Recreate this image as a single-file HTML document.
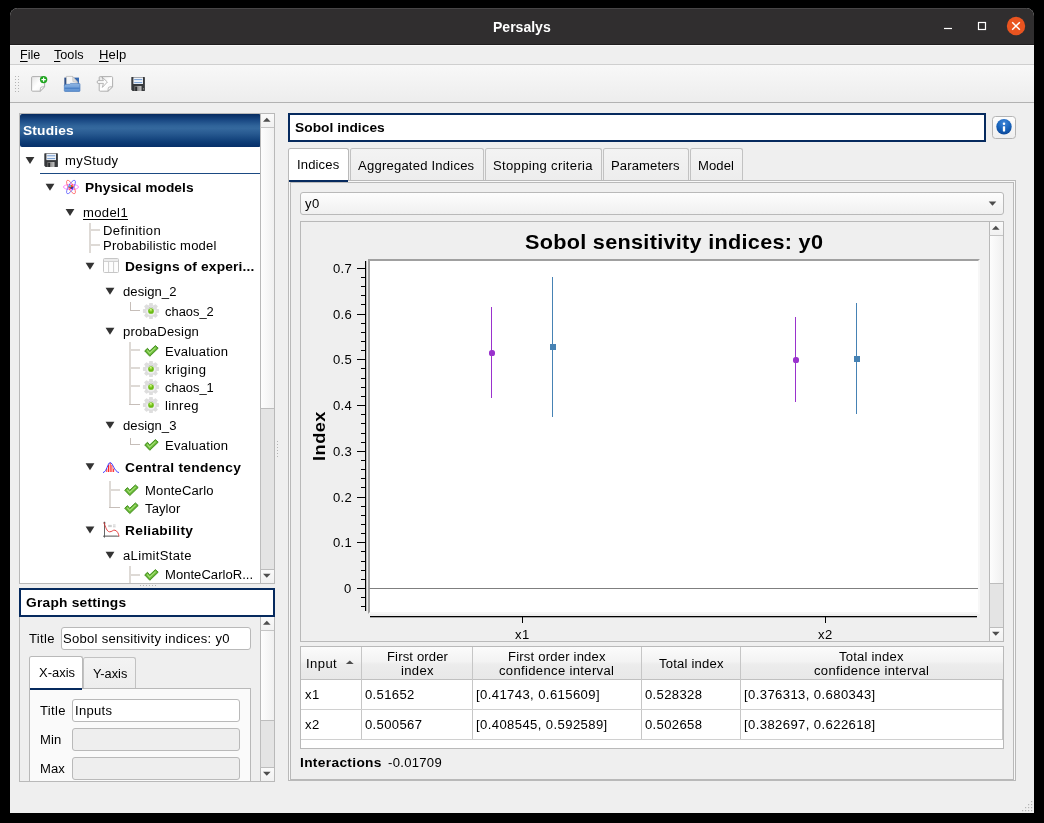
<!DOCTYPE html>
<html><head><meta charset="utf-8"><title>Persalys</title>
<style>
html,body{margin:0;padding:0;background:#000;}
body{width:1044px;height:823px;position:relative;overflow:hidden;font-family:"Liberation Sans",sans-serif;color:#000;}
.a{position:absolute;box-sizing:border-box;}
.t{position:absolute;white-space:nowrap;will-change:transform;transform-origin:0 0;}
u{text-decoration:underline;text-underline-offset:1.5px;text-decoration-thickness:1px;}
svg{position:absolute;overflow:visible;}
</style></head>
<body>
<div class="a " style="left:10px;top:8px;width:1024px;height:805px;background:#efefef;border-radius:8px 8px 0 0;overflow:hidden;"></div>
<div class="a " style="left:10px;top:8px;width:1024px;height:37px;background:#302e2f;border-radius:8px 8px 0 0;"></div>
<div class="t" style="left:493.40px;top:17.80px;font-size:14px;line-height:18px;letter-spacing:-0.000px;transform:scaleX(1.0018);font-weight:bold;color:#fff;">Persalys</div>
<div class="a " style="left:18px;top:8px;width:1008px;height:1px;background:#474546;"></div>
<svg style="left:934px;top:12px" width="100" height="30" viewBox="934 12 100 30"><circle cx="1016" cy="26" r="9.2" fill="#e95420"/><path d="M1012.2 22.2 L1019.8 29.8 M1019.8 22.2 L1012.2 29.8" stroke="#fff" stroke-width="1.5" fill="none"/><rect x="978.5" y="22.5" width="7" height="7" fill="none" stroke="#fff" stroke-width="1.2"/><path d="M944 28.5 H952" stroke="#fff" stroke-width="1.2"/></svg>
<div class="a " style="left:10px;top:44px;width:1024px;height:21px;background:#efefef;border-top:1px solid #1f1d1e;border-bottom:1px solid #cfcfcf;"></div>
<div class="a " style="left:10px;top:45px;width:1024px;height:1px;background:#fafafa;"></div>
<div class="t" style="left:20.00px;top:47.00px;font-size:12.5px;line-height:16px;letter-spacing:-0.020px;transform:scaleX(1.0000);"><u>F</u>ile</div>
<div class="t" style="left:54.00px;top:47.00px;font-size:12.5px;line-height:16px;letter-spacing:-0.000px;transform:scaleX(1.0128);"><u>T</u>ools</div>
<div class="t" style="left:99.00px;top:47.00px;font-size:12.5px;line-height:16px;letter-spacing:0.119px;transform:scaleX(1.0450);"><u>H</u>elp</div>
<div class="a " style="left:10px;top:65px;width:1024px;height:38px;background:linear-gradient(#f8f8f8,#ededed);border-bottom:1px solid #b2b2b2;"></div>
<svg style="left:0;top:0" width="30" height="100"><rect x="15" y="76" width="1" height="1" fill="#b5b5b5"/><rect x="18" y="76" width="1" height="1" fill="#b5b5b5"/><rect x="15" y="79" width="1" height="1" fill="#b5b5b5"/><rect x="18" y="79" width="1" height="1" fill="#b5b5b5"/><rect x="15" y="82" width="1" height="1" fill="#b5b5b5"/><rect x="18" y="82" width="1" height="1" fill="#b5b5b5"/><rect x="15" y="85" width="1" height="1" fill="#b5b5b5"/><rect x="18" y="85" width="1" height="1" fill="#b5b5b5"/><rect x="15" y="88" width="1" height="1" fill="#b5b5b5"/><rect x="18" y="88" width="1" height="1" fill="#b5b5b5"/><rect x="15" y="91" width="1" height="1" fill="#b5b5b5"/><rect x="18" y="91" width="1" height="1" fill="#b5b5b5"/></svg>
<svg style="left:0;top:0" width="160" height="100" viewBox="0 0 160 100">
<defs><linearGradient id="pg" x1="0" y1="0" x2="1" y2="1"><stop offset="0" stop-color="#e4e4e4"/><stop offset="0.5" stop-color="#ffffff"/><stop offset="1" stop-color="#f2f2f2"/></linearGradient>
<linearGradient id="fb" x1="0" y1="0" x2="1" y2="0"><stop offset="0" stop-color="#173a78"/><stop offset="0.5" stop-color="#2d5fa8"/><stop offset="1" stop-color="#3a6db5"/></linearGradient>
<linearGradient id="ff" x1="0" y1="0" x2="0" y2="1"><stop offset="0" stop-color="#8db4e2"/><stop offset="1" stop-color="#5b8fd0"/></linearGradient>
<linearGradient id="sh" x1="0" y1="0" x2="1" y2="0"><stop offset="0" stop-color="#6a6a6a"/><stop offset="1" stop-color="#c4c4c4"/></linearGradient></defs>
<!-- new -->
<path d="M32.6 76.6 H43.6 Q44.6 76.6 44.6 77.6 V86.8 L40.2 91.2 H32.6 Q31.6 91.2 31.6 90.2 V77.6 Q31.6 76.6 32.6 76.6 Z" fill="url(#pg)" stroke="#a6a6a6" stroke-width="0.9"/>
<path d="M44.6 86.8 Q41.5 86.6 40.8 87.4 Q40.2 88.4 40.2 91.2 Z" fill="#fafafa" stroke="#a6a6a6" stroke-width="0.8"/>
<circle cx="43.6" cy="79.6" r="3.7" fill="#1fa51f"/>
<path d="M43.6 77.4 V81.8 M41.4 79.6 H45.8" stroke="#fff" stroke-width="1.25"/>
<!-- open -->
<path d="M64.4 77.6 H79 V86 H64.4 Z" fill="url(#fb)"/>
<path d="M66.3 76.4 H72.6 L77.8 82.6 V86 H66.3 Z" fill="#f6f6f6" stroke="#b4b4b4" stroke-width="0.7"/>
<path d="M72.6 76.4 L72.9 81.6 L77.8 82.6 Z" fill="#dedede" stroke="#b0b0b0" stroke-width="0.5"/>
<path d="M64.3 85.2 Q64.3 84.4 65.1 84.4 L69.5 84.3 L70.6 83.4 H79.2 Q80 83.4 80 84.2 V90.6 Q80 91.5 79.2 91.5 H65.1 Q64.3 91.5 64.3 90.6 Z" fill="url(#ff)" stroke="#3f74b8" stroke-width="0.6"/>
<rect x="64.6" y="87.6" width="15.1" height="1.3" fill="#4a80c6"/>
<!-- import -->
<path d="M100.2 76.6 H111.6 Q112.6 76.6 112.6 77.6 V86.8 L108 91.2 H100.2 Q99.2 91.2 99.2 90.2 V77.6 Q99.2 76.6 100.2 76.6 Z" fill="url(#pg)" stroke="#a8a8a8" stroke-width="0.9"/>
<path d="M112.6 86.8 Q109.4 86.6 108.6 87.4 Q108 88.4 108 91.2 Z" fill="#fafafa" stroke="#a8a8a8" stroke-width="0.8"/>
<path d="M98 80.6 H103.4 L102 77 L107.4 82 L102.4 87.4 L103.4 83.4 H98 Q97.2 83.4 97.2 82 Q97.2 80.6 98 80.6 Z" fill="#fbfbfb" stroke="#a4a4a4" stroke-width="0.8" stroke-linejoin="round"/>
<!-- save -->
<path d="M131.3 77.6 Q131.3 77 131.9 77 H144.3 Q144.9 77 144.9 77.6 V90.4 Q144.9 91 144.3 91 H132.6 L131.3 89.8 Z" fill="#37393c"/>
<rect x="133.4" y="77.4" width="9.6" height="6.6" fill="#eef2f8"/>
<rect x="134.2" y="79" width="8" height="1.1" fill="#7fa4d4"/><rect x="134.2" y="82" width="8" height="1.1" fill="#7fa4d4"/>
<rect x="134.3" y="86" width="7.2" height="5" fill="url(#sh)"/><rect x="135.2" y="86.8" width="1.9" height="4.2" fill="#2a2c2f"/>
<rect x="143" y="88" width="0.9" height="1.6" fill="#888"/>
</svg>
<div class="a " style="left:19px;top:113px;width:256px;height:471px;background:#fff;border:1px solid #b9b9b9;"></div>
<div class="a " style="left:20px;top:114px;width:241px;height:33px;background:linear-gradient(#062b60 0%,#194883 18%,#30649a 36%,#34689d 44%,#275990 60%,#0e3d77 84%,#062f69 100%);border-radius:2px;"></div>
<div class="t" style="left:23.20px;top:122.80px;font-size:12.5px;line-height:16px;letter-spacing:0.160px;transform:scaleX(1.1000);font-weight:bold;color:#fff;">Studies</div>
<svg style="left:24px;top:154px" width="12" height="12"><path transform="translate(6.00,6.50)" d="M-4.4 -3.45 H4.4 L0 3.5 Z" fill="#333333"/></svg>
<svg style="left:44px;top:153px" width="16" height="16" viewBox="0 0 16 16">
<path d="M0.3 0.9 Q0.3 0.3 0.9 0.3 H13.3 Q13.9 0.3 13.9 0.9 V13.4 Q13.9 14 13.3 14 H1.6 L0.3 12.8 Z" fill="#37393c"/>
<rect x="2.4" y="0.7" width="9.6" height="6.4" fill="#eef2f8"/>
<rect x="3.2" y="2.2" width="8" height="1.1" fill="#7fa4d4"/><rect x="3.2" y="5" width="8" height="1.1" fill="#7fa4d4"/>
<rect x="3.3" y="9" width="7.2" height="5" fill="url(#sh)"/><rect x="4.2" y="9.8" width="1.9" height="4.2" fill="#2a2c2f"/>
</svg>
<div class="t" style="left:64.80px;top:153.00px;font-size:12.5px;line-height:16px;letter-spacing:0.363px;transform:scaleX(1.0450);">myStudy</div>
<div class="a " style="left:40px;top:173px;width:220px;height:1px;background:#1b4a82;"></div>
<svg style="left:44px;top:181px" width="12" height="12"><path transform="translate(6.00,6.30)" d="M-4.4 -3.45 H4.4 L0 3.5 Z" fill="#333333"/></svg>
<div class="t" style="left:84.80px;top:180.00px;font-size:12.5px;line-height:16px;letter-spacing:0.053px;transform:scaleX(1.1000);font-weight:bold;">Physical models</div>
<svg style="left:64px;top:206px" width="12" height="12"><path transform="translate(6.00,6.40)" d="M-4.4 -3.45 H4.4 L0 3.5 Z" fill="#333333"/></svg>
<div class="t" style="left:82.90px;top:204.60px;font-size:12.5px;line-height:16px;letter-spacing:0.346px;transform:scaleX(1.0450);"><u>model1</u></div>
<div class="a " style="left:89px;top:223px;width:2px;height:30px;background:#dedad6;"></div>
<div class="a " style="left:90px;top:229px;width:10px;height:2px;background:#dedad6;"></div>
<div class="a " style="left:90px;top:244px;width:10px;height:2px;background:#dedad6;"></div>
<div class="t" style="left:103.30px;top:222.70px;font-size:12.5px;line-height:16px;letter-spacing:0.348px;transform:scaleX(1.0450);">Definition</div>
<div class="t" style="left:103.30px;top:238.00px;font-size:12.5px;line-height:16px;letter-spacing:0.204px;transform:scaleX(1.0450);">Probabilistic model</div>
<svg style="left:84px;top:260px" width="12" height="12"><path transform="translate(6.00,6.30)" d="M-4.4 -3.45 H4.4 L0 3.5 Z" fill="#333333"/></svg>
<div class="t" style="left:124.70px;top:258.90px;font-size:12.5px;line-height:16px;letter-spacing:0.160px;transform:scaleX(1.1000);font-weight:bold;">Designs of experi...</div>
<svg style="left:104px;top:285px" width="12" height="12"><path transform="translate(6.00,6.20)" d="M-4.4 -3.45 H4.4 L0 3.5 Z" fill="#333333"/></svg>
<div class="t" style="left:123.40px;top:283.60px;font-size:12.5px;line-height:16px;letter-spacing:0.052px;transform:scaleX(1.0450);">design_2</div>
<div class="a " style="left:130px;top:302px;width:1px;height:9px;background:#c6beb9;"></div>
<div class="a " style="left:130px;top:310px;width:10px;height:1px;background:#c6beb9;"></div>
<svg style="left:142px;top:302px" width="18" height="18" viewBox="-9 -9 18 18">
<rect x="-1.9" y="-8.1" width="3.8" height="4" rx="0.7" transform="rotate(0)" fill="#dedede"/><rect x="-1.9" y="-8.1" width="3.8" height="4" rx="0.7" transform="rotate(45)" fill="#dedede"/><rect x="-1.9" y="-8.1" width="3.8" height="4" rx="0.7" transform="rotate(90)" fill="#dedede"/><rect x="-1.9" y="-8.1" width="3.8" height="4" rx="0.7" transform="rotate(135)" fill="#dedede"/><rect x="-1.9" y="-8.1" width="3.8" height="4" rx="0.7" transform="rotate(180)" fill="#dedede"/><rect x="-1.9" y="-8.1" width="3.8" height="4" rx="0.7" transform="rotate(225)" fill="#dedede"/><rect x="-1.9" y="-8.1" width="3.8" height="4" rx="0.7" transform="rotate(270)" fill="#dedede"/><rect x="-1.9" y="-8.1" width="3.8" height="4" rx="0.7" transform="rotate(315)" fill="#dedede"/><circle r="6.2" fill="#dddddd"/><circle r="4.7" fill="#efefef"/>
<path d="M-3.6 -1.6 A3.95 3.95 0 0 1 3.6 -1.6" fill="none" stroke="#c4c4c4" stroke-width="0.9"/>
<circle r="2.85" fill="#6abb14"/><circle cx="-0.2" cy="-1" r="1.5" fill="#a5de4c"/><circle cx="-0.3" cy="-1.5" r="0.7" fill="#d4f59a"/></svg>
<div class="t" style="left:165.40px;top:304.20px;font-size:12.5px;line-height:16px;letter-spacing:-0.000px;transform:scaleX(1.0324);">chaos_2</div>
<svg style="left:104px;top:325px" width="12" height="12"><path transform="translate(6.00,6.20)" d="M-4.4 -3.45 H4.4 L0 3.5 Z" fill="#333333"/></svg>
<div class="t" style="left:123.40px;top:323.60px;font-size:12.5px;line-height:16px;letter-spacing:0.172px;transform:scaleX(1.0450);">probaDesign</div>
<div class="a " style="left:129px;top:342px;width:2px;height:63px;background:#dedad6;"></div>
<div class="a " style="left:130px;top:349px;width:10px;height:2px;background:#dedad6;"></div>
<div class="a " style="left:130px;top:367px;width:10px;height:2px;background:#dedad6;"></div>
<div class="a " style="left:130px;top:385px;width:10px;height:2px;background:#dedad6;"></div>
<div class="a " style="left:129px;top:404px;width:11px;height:1px;background:#c6beb9;"></div>
<svg style="left:144px;top:344px" width="16" height="14"><g transform="translate(0.00,1.00)">
<path d="M0.7 5.9 L3.5 3.3 L5.7 6.0 L11.4 0.6 L14.2 3.2 L5.8 11.3 Z" fill="#68b934" stroke="#3a8618" stroke-width="0.9" stroke-linejoin="round"/>
<path d="M3.3 5.4 L5.7 8.2 L11.6 2.6" fill="none" stroke="#a8e07c" stroke-width="1.1"/>
</g></svg>
<div class="t" style="left:165.40px;top:343.60px;font-size:12.5px;line-height:16px;letter-spacing:0.221px;transform:scaleX(1.0450);">Evaluation</div>
<svg style="left:142px;top:360px" width="18" height="18" viewBox="-9 -9 18 18">
<rect x="-1.9" y="-8.1" width="3.8" height="4" rx="0.7" transform="rotate(0)" fill="#dedede"/><rect x="-1.9" y="-8.1" width="3.8" height="4" rx="0.7" transform="rotate(45)" fill="#dedede"/><rect x="-1.9" y="-8.1" width="3.8" height="4" rx="0.7" transform="rotate(90)" fill="#dedede"/><rect x="-1.9" y="-8.1" width="3.8" height="4" rx="0.7" transform="rotate(135)" fill="#dedede"/><rect x="-1.9" y="-8.1" width="3.8" height="4" rx="0.7" transform="rotate(180)" fill="#dedede"/><rect x="-1.9" y="-8.1" width="3.8" height="4" rx="0.7" transform="rotate(225)" fill="#dedede"/><rect x="-1.9" y="-8.1" width="3.8" height="4" rx="0.7" transform="rotate(270)" fill="#dedede"/><rect x="-1.9" y="-8.1" width="3.8" height="4" rx="0.7" transform="rotate(315)" fill="#dedede"/><circle r="6.2" fill="#dddddd"/><circle r="4.7" fill="#efefef"/>
<path d="M-3.6 -1.6 A3.95 3.95 0 0 1 3.6 -1.6" fill="none" stroke="#c4c4c4" stroke-width="0.9"/>
<circle r="2.85" fill="#6abb14"/><circle cx="-0.2" cy="-1" r="1.5" fill="#a5de4c"/><circle cx="-0.3" cy="-1.5" r="0.7" fill="#d4f59a"/></svg>
<div class="t" style="left:165.40px;top:361.60px;font-size:12.5px;line-height:16px;letter-spacing:0.399px;transform:scaleX(1.0450);">kriging</div>
<svg style="left:142px;top:378px" width="18" height="18" viewBox="-9 -9 18 18">
<rect x="-1.9" y="-8.1" width="3.8" height="4" rx="0.7" transform="rotate(0)" fill="#dedede"/><rect x="-1.9" y="-8.1" width="3.8" height="4" rx="0.7" transform="rotate(45)" fill="#dedede"/><rect x="-1.9" y="-8.1" width="3.8" height="4" rx="0.7" transform="rotate(90)" fill="#dedede"/><rect x="-1.9" y="-8.1" width="3.8" height="4" rx="0.7" transform="rotate(135)" fill="#dedede"/><rect x="-1.9" y="-8.1" width="3.8" height="4" rx="0.7" transform="rotate(180)" fill="#dedede"/><rect x="-1.9" y="-8.1" width="3.8" height="4" rx="0.7" transform="rotate(225)" fill="#dedede"/><rect x="-1.9" y="-8.1" width="3.8" height="4" rx="0.7" transform="rotate(270)" fill="#dedede"/><rect x="-1.9" y="-8.1" width="3.8" height="4" rx="0.7" transform="rotate(315)" fill="#dedede"/><circle r="6.2" fill="#dddddd"/><circle r="4.7" fill="#efefef"/>
<path d="M-3.6 -1.6 A3.95 3.95 0 0 1 3.6 -1.6" fill="none" stroke="#c4c4c4" stroke-width="0.9"/>
<circle r="2.85" fill="#6abb14"/><circle cx="-0.2" cy="-1" r="1.5" fill="#a5de4c"/><circle cx="-0.3" cy="-1.5" r="0.7" fill="#d4f59a"/></svg>
<div class="t" style="left:165.40px;top:379.70px;font-size:12.5px;line-height:16px;letter-spacing:-0.000px;transform:scaleX(1.0324);">chaos_1</div>
<svg style="left:142px;top:396px" width="18" height="18" viewBox="-9 -9 18 18">
<rect x="-1.9" y="-8.1" width="3.8" height="4" rx="0.7" transform="rotate(0)" fill="#dedede"/><rect x="-1.9" y="-8.1" width="3.8" height="4" rx="0.7" transform="rotate(45)" fill="#dedede"/><rect x="-1.9" y="-8.1" width="3.8" height="4" rx="0.7" transform="rotate(90)" fill="#dedede"/><rect x="-1.9" y="-8.1" width="3.8" height="4" rx="0.7" transform="rotate(135)" fill="#dedede"/><rect x="-1.9" y="-8.1" width="3.8" height="4" rx="0.7" transform="rotate(180)" fill="#dedede"/><rect x="-1.9" y="-8.1" width="3.8" height="4" rx="0.7" transform="rotate(225)" fill="#dedede"/><rect x="-1.9" y="-8.1" width="3.8" height="4" rx="0.7" transform="rotate(270)" fill="#dedede"/><rect x="-1.9" y="-8.1" width="3.8" height="4" rx="0.7" transform="rotate(315)" fill="#dedede"/><circle r="6.2" fill="#dddddd"/><circle r="4.7" fill="#efefef"/>
<path d="M-3.6 -1.6 A3.95 3.95 0 0 1 3.6 -1.6" fill="none" stroke="#c4c4c4" stroke-width="0.9"/>
<circle r="2.85" fill="#6abb14"/><circle cx="-0.2" cy="-1" r="1.5" fill="#a5de4c"/><circle cx="-0.3" cy="-1.5" r="0.7" fill="#d4f59a"/></svg>
<div class="t" style="left:165.40px;top:397.70px;font-size:12.5px;line-height:16px;letter-spacing:0.319px;transform:scaleX(1.0450);">linreg</div>
<svg style="left:104px;top:419px" width="12" height="12"><path transform="translate(6.00,6.20)" d="M-4.4 -3.45 H4.4 L0 3.5 Z" fill="#333333"/></svg>
<div class="t" style="left:123.40px;top:418.20px;font-size:12.5px;line-height:16px;letter-spacing:0.052px;transform:scaleX(1.0450);">design_3</div>
<div class="a " style="left:130px;top:438px;width:1px;height:7px;background:#c6beb9;"></div>
<div class="a " style="left:130px;top:444px;width:10px;height:1px;background:#c6beb9;"></div>
<svg style="left:144px;top:438px" width="16" height="14"><g transform="translate(0.00,1.00)">
<path d="M0.7 5.9 L3.5 3.3 L5.7 6.0 L11.4 0.6 L14.2 3.2 L5.8 11.3 Z" fill="#68b934" stroke="#3a8618" stroke-width="0.9" stroke-linejoin="round"/>
<path d="M3.3 5.4 L5.7 8.2 L11.6 2.6" fill="none" stroke="#a8e07c" stroke-width="1.1"/>
</g></svg>
<div class="t" style="left:165.40px;top:437.80px;font-size:12.5px;line-height:16px;letter-spacing:0.221px;transform:scaleX(1.0450);">Evaluation</div>
<svg style="left:84px;top:460px" width="12" height="12"><path transform="translate(6.00,6.80)" d="M-4.4 -3.45 H4.4 L0 3.5 Z" fill="#333333"/></svg>
<div class="t" style="left:124.70px;top:460.20px;font-size:12.5px;line-height:16px;letter-spacing:0.262px;transform:scaleX(1.1000);font-weight:bold;">Central tendency</div>
<div class="a " style="left:109px;top:481px;width:2px;height:27px;background:#dedad6;"></div>
<div class="a " style="left:110px;top:489px;width:10px;height:2px;background:#dedad6;"></div>
<div class="a " style="left:109px;top:507px;width:11px;height:1px;background:#c6beb9;"></div>
<svg style="left:124px;top:483px" width="16" height="14"><g transform="translate(0.00,1.30)">
<path d="M0.7 5.9 L3.5 3.3 L5.7 6.0 L11.4 0.6 L14.2 3.2 L5.8 11.3 Z" fill="#68b934" stroke="#3a8618" stroke-width="0.9" stroke-linejoin="round"/>
<path d="M3.3 5.4 L5.7 8.2 L11.6 2.6" fill="none" stroke="#a8e07c" stroke-width="1.1"/>
</g></svg>
<div class="t" style="left:145.40px;top:482.50px;font-size:12.5px;line-height:16px;letter-spacing:0.118px;transform:scaleX(1.0450);">MonteCarlo</div>
<svg style="left:124px;top:501px" width="16" height="14"><g transform="translate(0.00,1.30)">
<path d="M0.7 5.9 L3.5 3.3 L5.7 6.0 L11.4 0.6 L14.2 3.2 L5.8 11.3 Z" fill="#68b934" stroke="#3a8618" stroke-width="0.9" stroke-linejoin="round"/>
<path d="M3.3 5.4 L5.7 8.2 L11.6 2.6" fill="none" stroke="#a8e07c" stroke-width="1.1"/>
</g></svg>
<div class="t" style="left:145.40px;top:500.50px;font-size:12.5px;line-height:16px;letter-spacing:0.092px;transform:scaleX(1.0450);">Taylor</div>
<svg style="left:84px;top:524px" width="12" height="12"><path transform="translate(6.00,6.00)" d="M-4.4 -3.45 H4.4 L0 3.5 Z" fill="#333333"/></svg>
<div class="t" style="left:124.70px;top:522.80px;font-size:12.5px;line-height:16px;letter-spacing:0.268px;transform:scaleX(1.1000);font-weight:bold;">Reliability</div>
<svg style="left:104px;top:549px" width="12" height="12"><path transform="translate(6.00,6.30)" d="M-4.4 -3.45 H4.4 L0 3.5 Z" fill="#333333"/></svg>
<div class="t" style="left:123.40px;top:547.80px;font-size:12.5px;line-height:16px;letter-spacing:0.307px;transform:scaleX(1.0450);">aLimitState</div>
<div class="a " style="left:129px;top:566px;width:2px;height:17px;background:#dedad6;"></div>
<div class="a " style="left:130px;top:574px;width:10px;height:2px;background:#dedad6;"></div>
<svg style="left:144px;top:568px" width="16" height="14"><g transform="translate(0.00,1.00)">
<path d="M0.7 5.9 L3.5 3.3 L5.7 6.0 L11.4 0.6 L14.2 3.2 L5.8 11.3 Z" fill="#68b934" stroke="#3a8618" stroke-width="0.9" stroke-linejoin="round"/>
<path d="M3.3 5.4 L5.7 8.2 L11.6 2.6" fill="none" stroke="#a8e07c" stroke-width="1.1"/>
</g></svg>
<div class="t" style="left:165.40px;top:567.30px;font-size:12.5px;line-height:16px;letter-spacing:0.019px;transform:scaleX(1.0450);">MonteCarloR...</div>
<svg style="left:62px;top:179px" width="18" height="16" viewBox="-9 -8 18 16">
<ellipse rx="7.6" ry="2.6" fill="none" stroke="#ff50ff" stroke-width="0.65"/>
<ellipse rx="7.6" ry="2.6" fill="none" stroke="#ff4040" stroke-width="0.65" transform="rotate(60)"/>
<ellipse rx="7.6" ry="2.6" fill="none" stroke="#4040ff" stroke-width="0.65" transform="rotate(-60)"/>
<circle r="2.0" fill="#c82020"/><circle cx="-0.8" cy="-0.8" r="1.1" fill="#40c8e8"/><circle cx="1" cy="0.9" r="1" fill="#2020c0"/><circle cx="0.6" cy="-1.2" r="0.9" fill="#ff5a00"/>
</svg>
<svg style="left:103px;top:258px" width="16" height="15" viewBox="0 0 16 15">
<rect x="0.5" y="0.5" width="15" height="14" rx="1" fill="#fdfdfd" stroke="#c6c6c6"/>
<rect x="1" y="1" width="14" height="2.2" fill="#ececec"/><rect x="1" y="3.1" width="14" height="0.9" fill="#cccccc"/>
<path d="M5.6 3.6 V14 M10.6 3.6 V14" stroke="#cecece" stroke-width="1"/>
</svg>
<div class="a " style="left:260px;top:114px;width:14px;height:469px;background:linear-gradient(90deg,#fdfdfd,#f0f0f0);border-left:1px solid #b9b9b9;"></div>
<div class="a " style="left:260px;top:114px;width:14px;height:14px;background:linear-gradient(#fafafa,#f1f1f1);border-left:1px solid #b9b9b9;border-bottom:1px solid #c4c4c4;"></div>
<div class="a " style="left:260px;top:569px;width:14px;height:14px;background:linear-gradient(#fafafa,#f1f1f1);border-left:1px solid #b9b9b9;border-top:1px solid #c4c4c4;"></div>
<div class="a " style="left:260px;top:408px;width:14px;height:162px;background:#e4e4e4;border:1px solid #bdbdbd;border-right:none;"></div>
<svg style="left:260px;top:113px" width="12" height="12"><path transform="translate(6.80,6.80)" d="M-3.8 2 L0 -2 L3.8 2 Z" fill="#4d4d4d"/></svg>
<svg style="left:260px;top:569px" width="12" height="12"><path transform="translate(6.80,6.80)" d="M-3.8 -2 L0 2 L3.8 -2 Z" fill="#4d4d4d"/></svg>
<div class="a " style="left:19px;top:588px;width:256px;height:29px;background:#fff;border:2px solid #062a5e;"></div>
<div class="t" style="left:25.80px;top:594.70px;font-size:12.5px;line-height:16px;letter-spacing:0.214px;transform:scaleX(1.1000);font-weight:bold;">Graph settings</div>
<div class="a " style="left:19px;top:617px;width:256px;height:165px;border:1px solid #b9b9b9;border-top:none;background:#efefef;"></div>
<div class="a " style="left:260px;top:617px;width:14px;height:164px;background:linear-gradient(90deg,#fdfdfd,#f0f0f0);border-left:1px solid #b9b9b9;"></div>
<div class="a " style="left:260px;top:617px;width:14px;height:14px;background:linear-gradient(#fafafa,#f1f1f1);border-left:1px solid #b9b9b9;border-bottom:1px solid #c4c4c4;"></div>
<div class="a " style="left:260px;top:767px;width:14px;height:14px;background:linear-gradient(#fafafa,#f1f1f1);border-left:1px solid #b9b9b9;border-top:1px solid #c4c4c4;"></div>
<div class="a " style="left:260px;top:720px;width:14px;height:48px;background:#e4e4e4;border:1px solid #bdbdbd;border-right:none;"></div>
<svg style="left:260px;top:616px" width="12" height="12"><path transform="translate(6.80,6.80)" d="M-3.8 2 L0 -2 L3.8 2 Z" fill="#4d4d4d"/></svg>
<svg style="left:260px;top:767px" width="12" height="12"><path transform="translate(6.80,6.80)" d="M-3.8 -2 L0 2 L3.8 -2 Z" fill="#4d4d4d"/></svg>
<svg style="left:0;top:0" width="300" height="600"><rect x="140" y="585" width="1" height="1" fill="#b4b4b4"/><rect x="143" y="585" width="1" height="1" fill="#b4b4b4"/><rect x="146" y="585" width="1" height="1" fill="#b4b4b4"/><rect x="149" y="585" width="1" height="1" fill="#b4b4b4"/><rect x="152" y="585" width="1" height="1" fill="#b4b4b4"/><rect x="155" y="585" width="1" height="1" fill="#b4b4b4"/><rect x="277" y="441" width="1" height="1" fill="#b4b4b4"/><rect x="277" y="444" width="1" height="1" fill="#b4b4b4"/><rect x="277" y="447" width="1" height="1" fill="#b4b4b4"/><rect x="277" y="450" width="1" height="1" fill="#b4b4b4"/><rect x="277" y="453" width="1" height="1" fill="#b4b4b4"/><rect x="277" y="456" width="1" height="1" fill="#b4b4b4"/></svg>
<div class="t" style="left:29.40px;top:630.60px;font-size:12.5px;line-height:16px;letter-spacing:0.288px;transform:scaleX(1.0450);">Title</div>
<div class="a " style="left:61px;top:627px;width:190px;height:23px;background:#fff;border:1px solid #b9b9b9;border-radius:3px;"></div>
<div class="t" style="left:63.40px;top:630.60px;font-size:12.5px;line-height:16px;letter-spacing:0.255px;transform:scaleX(1.0450);">Sobol sensitivity indices: y0</div>
<div class="a " style="left:29px;top:688px;width:222px;height:95px;background:#fafafa;border:1px solid #b9b9b9;border-bottom:none;"></div>
<div class="a " style="left:29px;top:656px;width:54px;height:33px;background:#fff;border:1px solid #b9b9b9;border-bottom:none;border-radius:2.5px 2.5px 0 0;"></div>
<div class="a " style="left:30px;top:688px;width:52px;height:2px;background:#062a5e;"></div>
<div class="a " style="left:83px;top:657px;width:53px;height:31px;background:linear-gradient(#f3f3f3,#ededed);border:1px solid #c2c2c2;border-bottom:none;border-radius:2.5px 2.5px 0 0;"></div>
<div class="t" style="left:38.50px;top:665.00px;font-size:12.5px;line-height:16px;letter-spacing:0.000px;transform:scaleX(1.0364);">X-axis</div>
<div class="t" style="left:92.50px;top:665.60px;font-size:12.5px;line-height:16px;letter-spacing:0.000px;transform:scaleX(1.0205);">Y-axis</div>
<div class="t" style="left:40.00px;top:703.30px;font-size:12.5px;line-height:16px;letter-spacing:0.288px;transform:scaleX(1.0450);">Title</div>
<div class="a " style="left:72px;top:699px;width:168px;height:23px;background:#fff;border:1px solid #b9b9b9;border-radius:3px;"></div>
<div class="t" style="left:75.20px;top:703.30px;font-size:12.5px;line-height:16px;letter-spacing:0.281px;transform:scaleX(1.0450);">Inputs</div>
<div class="t" style="left:40.00px;top:732.00px;font-size:12.5px;line-height:16px;letter-spacing:0.080px;transform:scaleX(1.0450);">Min</div>
<div class="a " style="left:72px;top:728px;width:168px;height:23px;background:#eeeeee;border:1px solid #b9b9b9;border-radius:3px;"></div>
<div class="t" style="left:40.00px;top:761.00px;font-size:12.5px;line-height:16px;letter-spacing:0.050px;transform:scaleX(1.0450);">Max</div>
<div class="a " style="left:72px;top:757px;width:168px;height:23px;background:#eeeeee;border:1px solid #b9b9b9;border-radius:3px;"></div>
<div class="a " style="left:20px;top:781px;width:240px;height:1px;background:#b9b9b9;"></div>
<div class="a " style="left:19px;top:782px;width:260px;height:31px;background:#efefef;"></div>
<div class="a " style="left:288px;top:113px;width:698px;height:29px;background:#fff;border:2px solid #062a5e;"></div>
<div class="t" style="left:295.30px;top:119.90px;font-size:12.5px;line-height:16px;letter-spacing:0.025px;transform:scaleX(1.1000);font-weight:bold;">Sobol indices</div>
<div class="a " style="left:992px;top:116px;width:24px;height:23px;background:linear-gradient(#fdfdfd,#efefef);border:1px solid #b4b4b4;border-radius:3.5px;"></div>
<svg style="left:995px;top:118px" width="18" height="18" viewBox="-9 -8.8 18 18">
<defs><radialGradient id="ig" cx="0.5" cy="0.25" r="0.85"><stop offset="0" stop-color="#3f86d8"/><stop offset="0.55" stop-color="#1560b8"/><stop offset="1" stop-color="#0a3f8c"/></radialGradient></defs>
<circle r="7.7" fill="url(#ig)"/>
<circle cx="0" cy="-3.1" r="1.25" fill="#fff"/><rect x="-1.15" y="-0.6" width="2.3" height="5.2" rx="0.5" fill="#fff"/></svg>
<div class="a " style="left:288px;top:180px;width:728px;height:601px;border:1px solid #b9b9b9;background:#efefef;"></div>
<div class="a " style="left:289px;top:181px;width:726px;height:599px;border:1px solid #f8f8f8;border-bottom:none;background:#efefef;"></div>
<div class="a " style="left:290px;top:182px;width:724px;height:598px;border:1px solid #b9b9b9;background:#efefef;"></div>
<div class="a " style="left:288px;top:148px;width:61px;height:33px;background:#fff;border:1px solid #b9b9b9;border-bottom:none;border-radius:2.5px 2.5px 0 0;"></div>
<div class="a " style="left:289px;top:180px;width:59px;height:2px;background:#062a5e;"></div>
<div class="t" style="left:296.80px;top:156.80px;font-size:12.5px;line-height:16px;letter-spacing:0.130px;transform:scaleX(1.0450);">Indices</div>
<div class="a " style="left:350px;top:148px;width:134px;height:32px;background:linear-gradient(#f3f3f3,#ededed);border:1px solid #c2c2c2;border-bottom:none;border-radius:2.5px 2.5px 0 0;"></div>
<div class="t" style="left:357.80px;top:158.00px;font-size:12.5px;line-height:16px;letter-spacing:0.202px;transform:scaleX(1.0450);">Aggregated Indices</div>
<div class="a " style="left:485px;top:148px;width:117px;height:32px;background:linear-gradient(#f3f3f3,#ededed);border:1px solid #c2c2c2;border-bottom:none;border-radius:2.5px 2.5px 0 0;"></div>
<div class="t" style="left:492.50px;top:158.00px;font-size:12.5px;line-height:16px;letter-spacing:0.309px;transform:scaleX(1.0450);">Stopping criteria</div>
<div class="a " style="left:603px;top:148px;width:86px;height:32px;background:linear-gradient(#f3f3f3,#ededed);border:1px solid #c2c2c2;border-bottom:none;border-radius:2.5px 2.5px 0 0;"></div>
<div class="t" style="left:610.80px;top:158.00px;font-size:12.5px;line-height:16px;letter-spacing:0.117px;transform:scaleX(1.0450);">Parameters</div>
<div class="a " style="left:690px;top:148px;width:53px;height:32px;background:linear-gradient(#f3f3f3,#ededed);border:1px solid #c2c2c2;border-bottom:none;border-radius:2.5px 2.5px 0 0;"></div>
<div class="t" style="left:697.80px;top:158.00px;font-size:12.5px;line-height:16px;letter-spacing:0.090px;transform:scaleX(1.0450);">Model</div>
<div class="a " style="left:300px;top:192px;width:704px;height:23px;background:linear-gradient(#fdfdfd,#f0f0f0);border:1px solid #b9b9b9;border-radius:3px;"></div>
<div class="t" style="left:304.80px;top:196.00px;font-size:12.5px;line-height:16px;letter-spacing:0.456px;transform:scaleX(1.0450);">y0</div>
<svg style="left:986px;top:198px" width="13" height="11"><path transform="translate(6.5,5.6)" d="M-3.8 -2.2 H3.8 L0 2.2 Z" fill="#4d4d4d"/></svg>
<div class="a " style="left:300px;top:221px;width:704px;height:421px;border:1px solid #b9b9b9;background:#efefef;"></div>
<div class="a " style="left:989px;top:222px;width:14px;height:419px;background:linear-gradient(90deg,#fdfdfd,#f0f0f0);border-left:1px solid #b9b9b9;"></div>
<div class="a " style="left:989px;top:222px;width:14px;height:14px;background:linear-gradient(#fafafa,#f1f1f1);border-left:1px solid #b9b9b9;border-bottom:1px solid #c4c4c4;"></div>
<div class="a " style="left:989px;top:627px;width:14px;height:14px;background:linear-gradient(#fafafa,#f1f1f1);border-left:1px solid #b9b9b9;border-top:1px solid #c4c4c4;"></div>
<div class="a " style="left:989px;top:583px;width:14px;height:45px;background:#e4e4e4;border:1px solid #bdbdbd;border-right:none;"></div>
<svg style="left:989px;top:221px" width="12" height="12"><path transform="translate(6.80,6.80)" d="M-3.8 2 L0 -2 L3.8 2 Z" fill="#4d4d4d"/></svg>
<svg style="left:989px;top:627px" width="12" height="12"><path transform="translate(6.80,6.80)" d="M-3.8 -2 L0 2 L3.8 -2 Z" fill="#4d4d4d"/></svg>
<div class="a " style="left:1003px;top:222px;width:1px;height:419px;background:#b9b9b9;"></div>
<div class="t" style="left:524.84px;top:228.90px;font-size:19.69px;line-height:26px;letter-spacing:0.257px;transform:scaleX(1.1000);font-weight:bold;">Sobol sensitivity indices: y0</div>
<div class="t" style="left:311.4px;top:460.8px;font-size:17px;line-height:18px;font-weight:bold;letter-spacing:0.462px;transform-origin:0 0;transform:rotate(-90deg) scaleX(1.07);">Index</div>
<div class="a " style="left:368px;top:259px;width:612px;height:355px;background:#fff;border-left:2px solid #a0a0a0;border-top:2px solid #a0a0a0;border-right:2px solid #f7f7f7;border-bottom:2px solid #f7f7f7;"></div>
<svg style="left:0;top:0" width="1044" height="700"><rect x="365" y="261" width="1.2" height="350" fill="#000"/><rect x="361" y="606" width="4.5" height="1" fill="#000"/><rect x="361" y="597" width="4.5" height="1" fill="#000"/><rect x="357" y="588" width="8.5" height="1" fill="#000"/><rect x="361" y="579" width="4.5" height="1" fill="#000"/><rect x="361" y="570" width="4.5" height="1" fill="#000"/><rect x="361" y="561" width="4.5" height="1" fill="#000"/><rect x="361" y="551" width="4.5" height="1" fill="#000"/><rect x="357" y="542" width="8.5" height="1" fill="#000"/><rect x="361" y="533" width="4.5" height="1" fill="#000"/><rect x="361" y="524" width="4.5" height="1" fill="#000"/><rect x="361" y="515" width="4.5" height="1" fill="#000"/><rect x="361" y="506" width="4.5" height="1" fill="#000"/><rect x="357" y="497" width="8.5" height="1" fill="#000"/><rect x="361" y="487" width="4.5" height="1" fill="#000"/><rect x="361" y="478" width="4.5" height="1" fill="#000"/><rect x="361" y="469" width="4.5" height="1" fill="#000"/><rect x="361" y="460" width="4.5" height="1" fill="#000"/><rect x="357" y="451" width="8.5" height="1" fill="#000"/><rect x="361" y="442" width="4.5" height="1" fill="#000"/><rect x="361" y="433" width="4.5" height="1" fill="#000"/><rect x="361" y="423" width="4.5" height="1" fill="#000"/><rect x="361" y="414" width="4.5" height="1" fill="#000"/><rect x="357" y="405" width="8.5" height="1" fill="#000"/><rect x="361" y="396" width="4.5" height="1" fill="#000"/><rect x="361" y="387" width="4.5" height="1" fill="#000"/><rect x="361" y="378" width="4.5" height="1" fill="#000"/><rect x="361" y="368" width="4.5" height="1" fill="#000"/><rect x="357" y="359" width="8.5" height="1" fill="#000"/><rect x="361" y="350" width="4.5" height="1" fill="#000"/><rect x="361" y="341" width="4.5" height="1" fill="#000"/><rect x="361" y="332" width="4.5" height="1" fill="#000"/><rect x="361" y="323" width="4.5" height="1" fill="#000"/><rect x="357" y="314" width="8.5" height="1" fill="#000"/><rect x="361" y="304" width="4.5" height="1" fill="#000"/><rect x="361" y="295" width="4.5" height="1" fill="#000"/><rect x="361" y="286" width="4.5" height="1" fill="#000"/><rect x="361" y="277" width="4.5" height="1" fill="#000"/><rect x="357" y="268" width="8.5" height="1" fill="#000"/><rect x="370" y="616" width="607" height="1.3" fill="#000"/><rect x="522" y="616" width="1" height="7" fill="#000"/><rect x="825" y="616" width="1" height="7" fill="#000"/><rect x="369.5" y="588" width="608.5" height="1" fill="#7f7f7f"/><rect x="491" y="307" width="1" height="91" fill="#9a32cd"/><rect x="489" y="350" width="6" height="6" rx="2.6" fill="#9a32cd"/><rect x="552" y="277" width="1" height="140" fill="#4682b4"/><rect x="550" y="344" width="6" height="6" fill="#4682b4"/><rect x="795" y="317" width="1" height="85" fill="#9a32cd"/><rect x="793" y="357" width="6" height="6" rx="2.6" fill="#9a32cd"/><rect x="856" y="303" width="1" height="111" fill="#4682b4"/><rect x="854" y="356" width="6" height="6" fill="#4682b4"/></svg>
<div class="t" style="left:344.16px;top:581.00px;font-size:12.5px;line-height:16px;letter-spacing:0.358px;transform:scaleX(1.0450);">0</div>
<div class="t" style="left:332.71px;top:535.00px;font-size:12.5px;line-height:16px;letter-spacing:0.299px;transform:scaleX(1.0450);">0.1</div>
<div class="t" style="left:332.71px;top:490.00px;font-size:12.5px;line-height:16px;letter-spacing:0.299px;transform:scaleX(1.0450);">0.2</div>
<div class="t" style="left:332.71px;top:444.00px;font-size:12.5px;line-height:16px;letter-spacing:0.299px;transform:scaleX(1.0450);">0.3</div>
<div class="t" style="left:332.71px;top:398.00px;font-size:12.5px;line-height:16px;letter-spacing:0.299px;transform:scaleX(1.0450);">0.4</div>
<div class="t" style="left:332.71px;top:352.00px;font-size:12.5px;line-height:16px;letter-spacing:0.299px;transform:scaleX(1.0450);">0.5</div>
<div class="t" style="left:332.71px;top:307.00px;font-size:12.5px;line-height:16px;letter-spacing:0.299px;transform:scaleX(1.0450);">0.6</div>
<div class="t" style="left:332.71px;top:261.00px;font-size:12.5px;line-height:16px;letter-spacing:0.299px;transform:scaleX(1.0450);">0.7</div>
<div class="t" style="left:515.12px;top:627.00px;font-size:12.5px;line-height:16px;letter-spacing:0.456px;transform:scaleX(1.0450);">x1</div>
<div class="t" style="left:818.12px;top:627.00px;font-size:12.5px;line-height:16px;letter-spacing:0.456px;transform:scaleX(1.0450);">x2</div>
<div class="a " style="left:300px;top:646px;width:704px;height:103px;background:#fff;border:1px solid #b9b9b9;"></div>
<div class="a " style="left:301px;top:647px;width:702px;height:33px;background:linear-gradient(#fbfbfb 0%,#f3f3f3 45%,#ececec 55%,#e8e8e8 100%);border-bottom:1px solid #c0c0c0;"></div>
<div class="a " style="left:361px;top:647px;width:1px;height:93px;background:#c6c6c6;"></div>
<div class="a " style="left:472px;top:647px;width:1px;height:93px;background:#c6c6c6;"></div>
<div class="a " style="left:641px;top:647px;width:1px;height:93px;background:#c6c6c6;"></div>
<div class="a " style="left:740px;top:647px;width:1px;height:93px;background:#c6c6c6;"></div>
<div class="a " style="left:301px;top:709px;width:702px;height:1px;background:#d0d0d0;"></div>
<div class="a " style="left:301px;top:739px;width:702px;height:1px;background:#d0d0d0;"></div>
<div class="a " style="left:1002px;top:680px;width:1px;height:60px;background:#c6c6c6;"></div>
<div class="t" style="left:306.00px;top:656.00px;font-size:12.5px;line-height:16px;letter-spacing:0.392px;transform:scaleX(1.0450);">Input</div>
<svg style="left:345px;top:659px" width="10" height="8"><path transform="translate(4.8,3.4)" d="M-3.9 1.7 L0 -1.9 L3.9 1.7 Z" fill="#4d4d4d"/></svg>
<div class="t" style="left:386.75px;top:649.00px;font-size:12.5px;line-height:16px;letter-spacing:0.139px;transform:scaleX(1.0450);">First order</div>
<div class="t" style="left:400.87px;top:662.70px;font-size:12.5px;line-height:16px;letter-spacing:0.311px;transform:scaleX(1.0450);">index</div>
<div class="t" style="left:508.12px;top:649.00px;font-size:12.5px;line-height:16px;letter-spacing:0.192px;transform:scaleX(1.0450);">First order index</div>
<div class="t" style="left:499.35px;top:662.70px;font-size:12.5px;line-height:16px;letter-spacing:0.321px;transform:scaleX(1.0450);">confidence interval</div>
<div class="t" style="left:658.65px;top:656.00px;font-size:12.5px;line-height:16px;letter-spacing:0.196px;transform:scaleX(1.0450);">Total index</div>
<div class="t" style="left:839.35px;top:649.00px;font-size:12.5px;line-height:16px;letter-spacing:0.196px;transform:scaleX(1.0450);">Total index</div>
<div class="t" style="left:814.05px;top:662.70px;font-size:12.5px;line-height:16px;letter-spacing:0.321px;transform:scaleX(1.0450);">confidence interval</div>
<div class="t" style="left:304.70px;top:686.60px;font-size:12.5px;line-height:16px;letter-spacing:0.456px;transform:scaleX(1.0450);">x1</div>
<div class="t" style="left:365.20px;top:686.60px;font-size:12.5px;line-height:16px;letter-spacing:0.333px;transform:scaleX(1.0450);">0.51652</div>
<div class="t" style="left:475.80px;top:686.60px;font-size:12.5px;line-height:16px;letter-spacing:0.390px;transform:scaleX(1.0450);">[0.41743, 0.615609]</div>
<div class="t" style="left:645.40px;top:686.60px;font-size:12.5px;line-height:16px;letter-spacing:0.336px;transform:scaleX(1.0450);">0.528328</div>
<div class="t" style="left:744.00px;top:686.60px;font-size:12.5px;line-height:16px;letter-spacing:0.389px;transform:scaleX(1.0450);">[0.376313, 0.680343]</div>
<div class="t" style="left:304.70px;top:716.50px;font-size:12.5px;line-height:16px;letter-spacing:0.456px;transform:scaleX(1.0450);">x2</div>
<div class="t" style="left:365.20px;top:716.50px;font-size:12.5px;line-height:16px;letter-spacing:0.336px;transform:scaleX(1.0450);">0.500567</div>
<div class="t" style="left:475.80px;top:716.50px;font-size:12.5px;line-height:16px;letter-spacing:0.389px;transform:scaleX(1.0450);">[0.408545, 0.592589]</div>
<div class="t" style="left:645.40px;top:716.50px;font-size:12.5px;line-height:16px;letter-spacing:0.336px;transform:scaleX(1.0450);">0.502658</div>
<div class="t" style="left:744.00px;top:716.50px;font-size:12.5px;line-height:16px;letter-spacing:0.389px;transform:scaleX(1.0450);">[0.382697, 0.622618]</div>
<div class="t" style="left:300.40px;top:755.00px;font-size:12.5px;line-height:16px;letter-spacing:0.293px;transform:scaleX(1.1000);font-weight:bold;">Interactions</div>
<div class="t" style="left:388.20px;top:755.00px;font-size:12.5px;line-height:16px;letter-spacing:0.289px;transform:scaleX(1.0450);">-0.01709</div>
<svg style="left:102px;top:461px" width="18" height="13" viewBox="102 461 18 13">
<path d="M106.8 472 V468.6 M108.5 472 V465 M110.2 472 V462.8 M111.9 472 V465 M113.6 472 V468.6" stroke="#ff1a1a" stroke-width="0.95"/>
<path d="M103 472.6 C107 471.8 107.6 462.6 110.2 462.6 C112.8 462.6 114 471.4 119 472.6" fill="none" stroke="#2a2aff" stroke-width="0.9"/>
</svg>
<svg style="left:102px;top:521px" width="18" height="18" viewBox="102 521 18 18">
<path d="M104.5 522 V537.6 M103 536.2 H119" stroke="#555" stroke-width="0.9" fill="none"/>
<path d="M103.6 523.4 L104.5 521.8 L105.4 523.4" stroke="#555" stroke-width="0.7" fill="none"/>
<path d="M106 536.2 v-1 M108 536.2 v-1 M110 536.2 v-1 M112 536.2 v-1 M114 536.2 v-1 M116 536.2 v-1" stroke="#777" stroke-width="0.6"/>
<path d="M104 522.5 C105.6 527 106.8 531.6 109.5 531.8 C112 532 113 529.6 115 530.2 C117.4 531 118.6 533.6 119 536.4" fill="none" stroke="#e03030" stroke-width="0.9"/>
<path d="M108.2 525.4 h3.6 M108.2 526.6 h3.6 M113 525 h2.6 M113 526.8 h2.6" stroke="#c4c4c4" stroke-width="0.9"/>
</svg>
<svg style="left:0;top:0" width="1044" height="823"><rect x="1031" y="801" width="1.2" height="1.2" fill="#b5b5b5"/><rect x="1031" y="804" width="1.2" height="1.2" fill="#b5b5b5"/><rect x="1028" y="804" width="1.2" height="1.2" fill="#b5b5b5"/><rect x="1031" y="807" width="1.2" height="1.2" fill="#b5b5b5"/><rect x="1028" y="807" width="1.2" height="1.2" fill="#b5b5b5"/><rect x="1025" y="807" width="1.2" height="1.2" fill="#b5b5b5"/><rect x="1031" y="810" width="1.2" height="1.2" fill="#b5b5b5"/><rect x="1028" y="810" width="1.2" height="1.2" fill="#b5b5b5"/><rect x="1025" y="810" width="1.2" height="1.2" fill="#b5b5b5"/><rect x="1022" y="810" width="1.2" height="1.2" fill="#b5b5b5"/></svg>
</body></html>
